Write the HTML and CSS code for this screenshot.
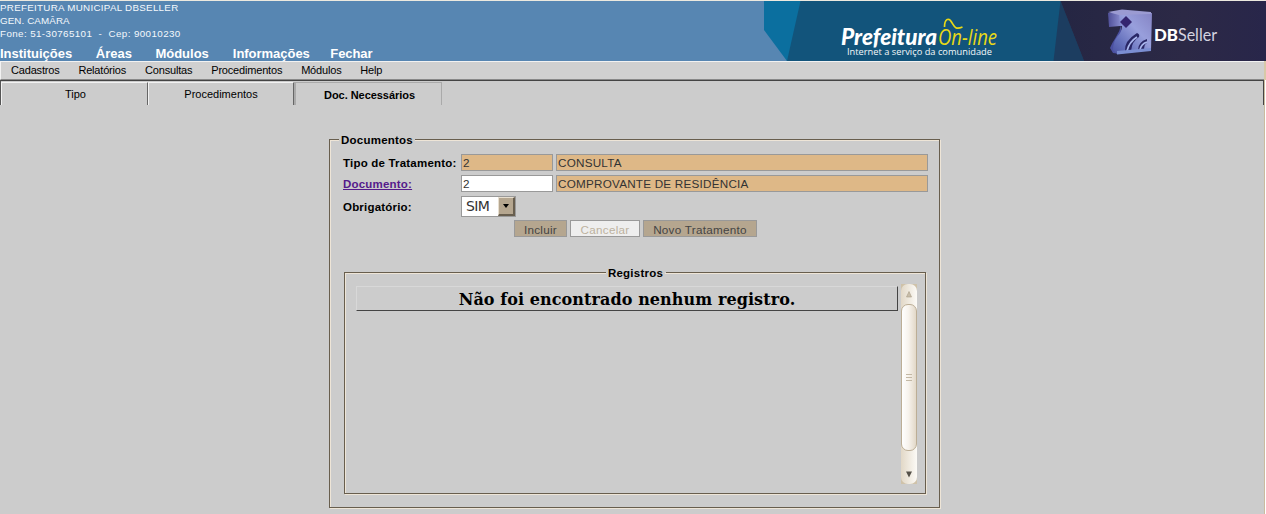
FILE: index.html
```html
<!DOCTYPE html>
<html lang="pt-BR">
<head>
<meta charset="utf-8">
<title>Prefeitura On-line</title>
<link rel="stylesheet" href="styles.css">
</head>
<body>
<header class="header">
  <div class="identity">
    <div class="org">
      <div class="org-name">PREFEITURA MUNICIPAL DBSELLER</div>
      <div class="org-city">GEN. CAMÂRA</div>
      <div class="org-phone">Fone: 51-30765101 &nbsp;- &nbsp;Cep: 90010230</div>
    </div>
    <nav class="main-nav"><a>Instituições</a><a>Áreas</a><a>Módulos</a><a>Informações</a><a>Fechar</a></nav>
  </div>
  <svg class="banner" width="502" height="60" viewBox="764 1 502 60">
    <defs>
      <linearGradient id="cube" x1="1" y1="0" x2="0" y2="1"><stop offset="0" stop-color="#8584c4"/><stop offset=".4" stop-color="#989fdc"/><stop offset=".75" stop-color="#6672bd"/><stop offset="1" stop-color="#4b53a3"/></linearGradient>
      <linearGradient id="side" x1="0" y1="0" x2="1" y2="0"><stop offset="0" stop-color="#4f4f98"/><stop offset="1" stop-color="#8588cb"/></linearGradient>
      <linearGradient id="night" x1="0" y1="0" x2="1" y2="0"><stop offset="0" stop-color="#252643"/><stop offset=".6" stop-color="#2c2946"/><stop offset="1" stop-color="#28264a"/></linearGradient>
    </defs>
    <path fill="#12547b" d="M764 1h502v60H787z"/>
    <path fill="#0b6f9f" d="M764 1h36.500L787 61l-23-31z"/>
    <path fill="#1c3d60" d="M1060.500 1L1084 61h-30.500z"/>
    <path fill="url(#night)" d="M1060.500 1H1266v60h-182z"/>
    <text class="brand" x="841" y="44.500" textLength="96" lengthAdjust="spacingAndGlyphs">Prefeitura</text>
    <text class="brand-alt" x="938" y="44.500" textLength="59" lengthAdjust="spacingAndGlyphs">On-line</text>
    <path d="M944.500 27c0-8 4-10 7-5s4 8 11 5" fill="none" stroke="#e9d916" stroke-width="1.700"/>
    <text class="slogan" x="847" y="55" textLength="145" lengthAdjust="spacingAndGlyphs">Internet a serviço da comunidade</text>
    <path fill="#4b50a0" d="M1121 25q-1 6-5 12t-6 11l3 5 7 1 2-4z"/>
    <path fill="url(#cube)" d="M1119 14l33-1-1 37-34 4-4-4q0-8 4-13 5-5 5-11l-3 0z"/>
    <path fill="url(#side)" d="M1108 13l11-1 1 14-11 1z"/>
    <path fill="#9b9bd2" d="M1108 12l14-2.500 29 2.500v2l-32 1z"/>
    <path fill="#34256f" d="M1126 16l6 6-6 6-6-6z"/>
    <path fill="#292766" d="M1125 51q-1-10 12-18 3 1 2 4-7 4-8 14zM1138 50q0-8 9-11v4q-3 1-3 7z"/>
    <path fill="none" stroke="#a9b6ed" stroke-width="1.800" d="M1127 51q2-9 10-14M1140 50q1-6 7-8"/>
    <path fill="#7b8ed2" d="M1117 51l34-3v3l-34 3.500z"/>
    <text class="db" x="1154" y="40.500" textLength="24" lengthAdjust="spacingAndGlyphs">DB</text>
    <text class="seller" x="1178" y="40.500" textLength="39" lengthAdjust="spacingAndGlyphs">Seller</text>
  </svg>
</header>
<nav class="menu"><a>Cadastros</a><a>Relatórios</a><a>Consultas</a><a>Procedimentos</a><a>Módulos</a><a>Help</a></nav>
<div class="tabs">
  <div class="tab">Tipo</div>
  <div class="tab">Procedimentos</div>
  <div class="tab active">Doc. Necessários</div>
</div>
<main class="content">
  <fieldset class="documents">
    <legend>Documentos</legend>
    <div class="form">
      <label>Tipo de Tratamento:</label><div class="field locked">2</div><div class="field locked">CONSULTA</div>
      <a class="link">Documento:</a><div class="field">2</div><div class="field locked">COMPROVANTE DE RESIDÊNCIA</div>
      <label class="tall">Obrigatório:</label>
      <div class="select"><span>SIM</span><div class="arrow"><svg width="6" height="4"><path d="M0 0h6L3 4z"/></svg></div></div>
    </div>
    <div class="actions">
      <button class="btn include">Incluir</button>
      <button class="btn cancel" disabled>Cancelar</button>
      <button class="btn fresh">Novo Tratamento</button>
    </div>
    <fieldset class="records">
      <legend>Registros</legend>
      <div class="list">
        <div class="empty">Não foi encontrado nenhum registro.</div>
        <div class="scroll">
          <div class="track">
            <svg width="16" height="20"><path d="M8 7.500l2.500 5.500h-5z" fill="#c8bdaa" stroke="#aa9d87" stroke-width=".6"/></svg>
            <div class="thumb"><i></i><i></i><i></i></div>
            <svg class="down" width="16" height="20"><path d="M5 7.500h6l-3 6z" fill="#555048"/></svg>
          </div>
        </div>
      </div>
    </fieldset>
  </fieldset>
</main>
</body>
</html>
```
FILE: styles.css
```css
* { box-sizing: border-box; }
body {
  margin: 0;
  height: 514px;
  overflow: hidden;
  background: #ccc;
  border-top: 1px solid #ece9df;
  font: 11px "Liberation Sans", Arial, sans-serif;
  color: #000;
}
.header { display: flex; justify-content: space-between; height: 60px; background: #5786b2; color: #fff; }
.banner { display: block; background: #5786b2; }
.org { height: 46px; font-size: 9.8px; line-height: 13px; letter-spacing: .28px; white-space: nowrap; color: #f4f8fc; }
.org-city { letter-spacing: .1px; }
.org-phone { letter-spacing: .4px; }
.main-nav { display: flex; gap: 23.5px; font-size: 13px; font-weight: bold; line-height: 14px; }
.main-nav a:nth-child(4) { letter-spacing: -.03px; padding-left: .5px; }
.main-nav a:last-child { margin-left: -3px; letter-spacing: -.1px; }
.brand { font: italic 900 22.5px Lato, sans-serif; fill: #fff; }
.brand-alt { font: italic 21px "Open Sans", sans-serif; fill: #e9d916; }
.slogan { font: 9.5px "Open Sans", sans-serif; fill: #f4f8fa; }
.db { font: 900 17px Lato, sans-serif; fill: #fff; }
.seller { font: 18px Lato, sans-serif; fill: #d5d3e0; }
.menu {
  display: flex;
  gap: 18.9px;
  width: 1264px;
  height: 19px;
  padding-left: 10px;
  background: #d0d0d0;
  border-top: 1px solid #f2f2f2;
  border-left: 1px solid #f2f2f2;
  border-bottom: 1px solid #888;
  line-height: 17px;
  letter-spacing: -.18px;
  box-shadow: 2px 0 #d8c9a8;
}
.tabs {
  display: flex;
  width: 1264px;
  height: 25px;
  padding-top: 1px;
  border-top: 1px solid #444;
  border-left: 1px solid #555;
  border-right: 1px solid #444;
  box-shadow: 1px 0 #cbbb9f, 2px 0 #fff;
}
.tab {
  width: 147px;
  height: 23px;
  padding-left: 2px;
  border-top: 1px solid #f2f2f2;
  border-left: 1px solid #f2f2f2;
  border-right: 1px solid #666;
  text-align: center;
  line-height: 22px;
}
.tab + .tab { width: 146px; padding-left: 0; }
.tab.active { width: 148px; padding-left: 2px; border: 1px solid #aaa; border-width: 1px 1px 0 2px; line-height: 24px; font-weight: bold; letter-spacing: -.05px; }
.content { box-shadow: 1px 0 #cbbb9f, 2px 0 #fff; width: 1264px; padding: 28px 0 0 329px; height: 409px; }
fieldset { margin: 0; min-width: 0; border: 1px solid #685e4e; box-shadow: inset 1px 1px #eee5d7, 1px 1px #eee5d7; }
legend { height: 13px; padding: 0 2px; font-size: 11.5px; font-weight: bold; line-height: 15px; letter-spacing: .23px; background: #ccc; }
.documents { width: 611px; height: 375px; padding: 8px 11px 0 14px; }
.documents > legend { margin-left: -5px; }
.form { display: grid; grid-template-columns: 114px 93px 372px; column-gap: 3px; row-gap: 4px; margin-left: -1px; font-size: 11.5px; font-weight: bold; letter-spacing: .2px; }
.form label, .link { line-height: 19px; height: 17px; white-space: nowrap; }
.link { justify-self: start; color: #551a8b; text-decoration: underline; }
.form .tall { height: 21px; line-height: 23px; }
.field { height: 17px; margin-left: 1px; padding-left: 1px; border: 1px solid #999; background: #fff; color: #333; font-weight: normal; font-size: 11.7px; line-height: 16px; letter-spacing: .23px; }
.field:nth-child(3n) { margin-left: 0; }
.locked { background: #deb887; }
.select { display: flex; justify-content: space-between; margin-left: 1px; width: 55px; height: 21px; border: 1px solid #999; background: #fff; color: #333; font: 14px/18px "DejaVu Sans", sans-serif; }
.select span { padding-left: 4px; letter-spacing: -.6px; }
.arrow { display: flex; align-items: center; justify-content: center; width: 17px; border: 1px solid #e8dfd0; border-right: 2px solid #685e4e; border-bottom: 2px solid #685e4e; background: #b5a68f; }
.actions { display: flex; gap: 3px; margin: 3px 0 0 170px; }
.btn { width: 53px; height: 17px; padding: 2px 0 0; border: 1px solid #999; background: #b5a68f; color: #444; font: 11.7px/14px "Liberation Sans", sans-serif; letter-spacing: .27px; white-space: nowrap; }
.btn.cancel { width: 70px; background: #eee; color: #bdb29f; }
.btn.fresh { width: 114px; }
.records { width: 582px; height: 228px; margin: 29px 0 0 0; padding: 5px 8px 0 11px; }
.records > legend { position: relative; left: -1px; margin: 0 auto; }
.list { display: flex; justify-content: space-between; align-items: flex-start; height: 201px; }
.empty { width: 542px; height: 25px; margin-top: 2px; border: 1px solid #444; border-top-color: #d8d8d8; border-left-color: #d8d8d8; text-align: center; font: bold 16px/25px "DejaVu Serif", serif; letter-spacing: .08px; }
.scroll { width: 16px; height: 200px; background: #cfc2a9; }
.track { display: flex; flex-direction: column; height: 200px; border-radius: 7px; background: linear-gradient(90deg, #e2d8c7, #fcfaf6); }
.track svg { display: block; }
.thumb { display: flex; flex-direction: column; justify-content: center; align-items: center; gap: 2px; height: 147px; border: 1px solid #bcae96; border-radius: 7px; background: linear-gradient(90deg, #fff, #f7f3ed 45%, #e2d8c8); }
.thumb i { width: 6px; height: 1px; background: #c3b8a5; }
.down { margin-top: 13px; }
```
